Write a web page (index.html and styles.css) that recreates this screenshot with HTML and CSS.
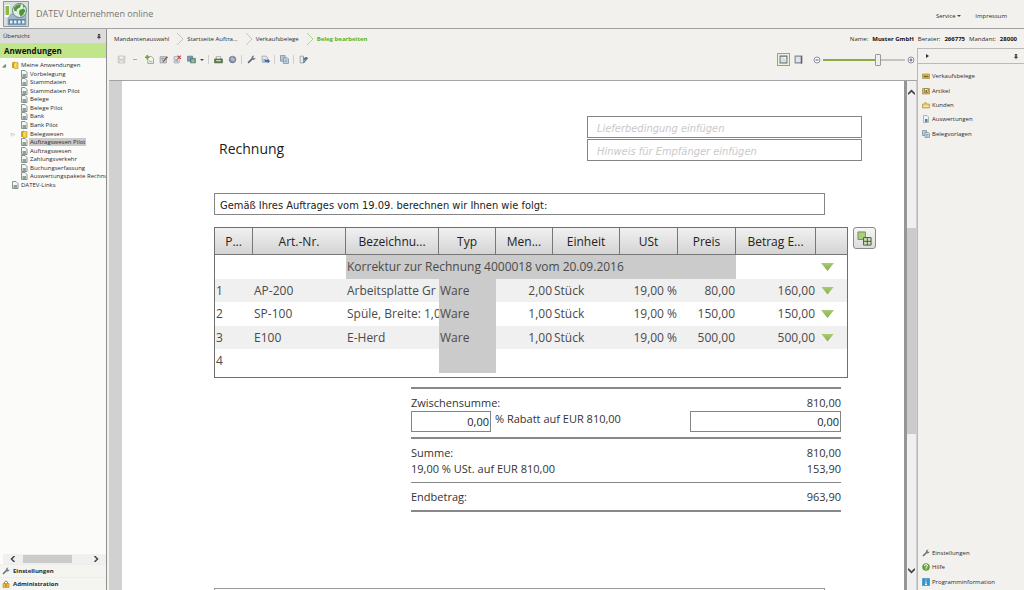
FILE: index.html
```html
<!DOCTYPE html>
<html lang="de">
<head>
<meta charset="utf-8">
<title>DATEV Unternehmen online</title>
<link rel="stylesheet" href="styles.css">
</head>
<body>
<svg class="defs" aria-hidden="true">
  <symbol id="doc" viewBox="0 0 16 16"><path d="M3 1h7l4 4v10H3z" fill="#f4f6f4" stroke="#6f7b76" stroke-width="1.6"/><path d="M5 8h7v6H5z" fill="#8fa39a"/></symbol>
  <symbol id="folder" viewBox="0 0 16 16"><path d="M2 3l6-2v13H2z" fill="#d9a520"/><path d="M6 3h8v12H6z" fill="#f4cf3c" stroke="#b78a17"/><path d="M8 5v8" stroke="#fbeb9a" stroke-width="2"/></symbol>
  <symbol id="wrench" viewBox="0 0 16 16"><path d="M2 14l7-7" stroke="#5d6673" stroke-width="3"/><path d="M8 8c-1-4 1-7 5-7l-2 3 1 2 3-1c0 3-3 5-7 3z" fill="#6d7885"/></symbol>
  <symbol id="lock" viewBox="0 0 16 16"><path d="M5 8V4q3-4 6 0v4" fill="none" stroke="#a08b50" stroke-width="2"/><path d="M2 7h12v8H2z" fill="#e8bd3c" stroke="#a47b18"/><path d="M8 9v4" stroke="#7e5c10" stroke-width="2"/></symbol>
  <symbol id="pin" viewBox="0 0 16 16"><path d="M5 1h6v8H5zM3 9h10v2H3zM7 11h2v4H7z" fill="#333"/><path d="M7 3h2v5H7z" fill="#ddd"/></symbol>
  <symbol id="pages" viewBox="0 0 16 16"><path d="M1 1h8v10H1z" fill="#b9cbd8" stroke="#53697b"/><path d="M6 5h7l2 2v8H6z" fill="#d3e0ea" stroke="#53697b"/><path d="M8 9h5M8 12h5" stroke="#6c90ab" stroke-width="1.5"/></symbol>
  <symbol id="chev" viewBox="0 0 8 12"><path d="M1 0l6 6-6 6" fill="none" stroke="currentColor"/></symbol>
</svg>

<header class="top">
  <svg class="logo" viewBox="0 0 52 52">
    <path d="M1 1h50v50H1z" fill="#d9dfdf" stroke="#8d9a9b" stroke-width="2"/>
    <path d="M4 8h9v24H4z" fill="#fff"/><path d="M5 10h7v18H5z" fill="#8fb93f"/>
    <path d="M16 26h30v22H10V34z" fill="#9db6ca" stroke="#708ba2"/>
    <circle cx="33" cy="19" r="14" fill="#e0eee3" stroke="#62847c" stroke-width="2"/>
    <path d="M22 13q8-9 14-6l-2 6-6 3-1 5-5-2zM33 18l8-3 4 4-5 9-5 3-3-7zM40 7l5 5-5 1z" fill="#4f9636"/>
    <path d="M11 36h34v11H11z" fill="#5d86aa"/>
    <path d="M14 39h5v6h-5zM22 39h5v6h-5zM30 39h5v6h-5zM38 39h5v6h-5z" fill="#e2edf5"/>
  </svg>
  <h1>DATEV Unternehmen online</h1>
  <nav class="meta"><a href="#">Service <span class="tri"></span></a><a href="#">Impressum</a></nav>
</header>

<div class="app">
  <aside class="side">
    <div class="side-head"><span>Übersicht</span><svg class="ic6"><use href="#pin"/></svg></div>
    <h2>Anwendungen</h2>
    <ul class="tree">
      <li class="l1"><span class="tw open">◢</span><svg class="ic"><use href="#folder"/></svg><a href="#">Meine Anwendungen</a></li>
      <li><svg class="ic"><use href="#doc"/></svg><a href="#">Vorbelegung</a></li>
      <li><svg class="ic"><use href="#doc"/></svg><a href="#">Stammdaten</a></li>
      <li><svg class="ic"><use href="#doc"/></svg><a href="#">Stammdaten Pilot</a></li>
      <li><svg class="ic"><use href="#doc"/></svg><a href="#">Belege</a></li>
      <li><svg class="ic"><use href="#doc"/></svg><a href="#">Belege Pilot</a></li>
      <li><svg class="ic"><use href="#doc"/></svg><a href="#">Bank</a></li>
      <li><svg class="ic"><use href="#doc"/></svg><a href="#">Bank Pilot</a></li>
      <li class="exp"><span class="tw">▷</span><svg class="ic"><use href="#folder"/></svg><a href="#">Belegwesen</a></li>
      <li><svg class="ic"><use href="#doc"/></svg><a href="#" class="sel">Auftragswesen Pilot</a></li>
      <li><svg class="ic"><use href="#doc"/></svg><a href="#">Auftragswesen</a></li>
      <li><svg class="ic"><use href="#doc"/></svg><a href="#">Zahlungsverkehr</a></li>
      <li><svg class="ic"><use href="#doc"/></svg><a href="#">Buchungserfassung</a></li>
      <li><svg class="ic"><use href="#doc"/></svg><a href="#">Auswertungspakete Rechnu</a></li>
      <li class="l1 links"><svg class="ic"><use href="#doc"/></svg><a href="#">DATEV-Links</a></li>
    </ul>
    <div class="hscroll">
      <button aria-label="Nach links"><svg viewBox="0 0 8 8"><path d="M6 0L2 4l4 4"/></svg></button>
      <div class="htrack"><div class="hthumb"></div></div>
      <button aria-label="Nach rechts"><svg viewBox="0 0 8 8"><path d="M2 0l4 4-4 4"/></svg></button>
    </div>
    <a class="side-link" href="#"><svg class="ic8"><use href="#wrench"/></svg>Einstellungen</a>
    <a class="side-link" href="#"><svg class="ic8"><use href="#lock"/></svg>Administration</a>
  </aside>

  <main class="main">
    <div class="pathbar">
      <nav class="crumbs">
        <a href="#">Mandantenauswahl</a><svg><use href="#chev"/></svg>
        <a href="#">Startseite Auftra...</a><svg><use href="#chev"/></svg>
        <a href="#">Verkaufsbelege</a><svg class="g"><use href="#chev"/></svg>
        <a href="#" class="cur">Beleg bearbeiten</a>
      </nav>
      <div class="client"><span>Name:</span><b>Muster GmbH</b><span>Berater:</span><b>266775</b><span>Mandant:</span><b>28000</b></div>
    </div>

    <div class="work">
      <section class="editor">
        <div class="toolbar">
          <button aria-label="Speichern" disabled><svg viewBox="0 0 16 16"><path d="M2 2h12v12H2z" fill="#d5d5d5" stroke="#aaa"/><path d="M4 2h8v5H4zM5 10h6v4H5z" fill="#f5f5f5" stroke="#b5b5b5"/></svg></button>
          <button aria-label="Speicheroptionen" disabled><span class="dash"></span></button>
          <button aria-label="Neu"><svg viewBox="0 0 16 16"><path d="M5 3h7l3 3v9H5z" fill="#f5f8f1" stroke="#657060"/><path d="M4 0v8M0 4h8" stroke="#74a630" stroke-width="3"/><path d="M7 10h6v3H7z" fill="#b9c7ab"/></svg></button>
          <button aria-label="Bearbeiten"><svg viewBox="0 0 16 16"><path d="M2 3h11v11H2z" fill="#d8dcdf" stroke="#6a7075"/><path d="M4 6h6M4 9h4" stroke="#59616a"/><path d="M6 12l8-10 2 2-8 9z" fill="#7b5a56"/></svg></button>
          <button aria-label="Löschen"><svg viewBox="0 0 16 16"><path d="M2 3h9v11H2z" fill="#e8eaec" stroke="#7c8289"/><path d="M4 7h5v5H4z" fill="#a7adb4"/><path d="M8 1l6 6M14 1L8 7" stroke="#c2453b" stroke-width="2"/></svg></button>
          <button aria-label="Kopieren"><svg viewBox="0 0 16 16"><path d="M1 2h9v9H1z" fill="#7fa1b8" stroke="#456379"/><path d="M6 6h9v8H6z" fill="#6d9a6b" stroke="#456379"/><path d="M8 9h5M8 12h5" stroke="#e6f0e2"/></svg></button>
          <button class="slim" aria-label="Kopieroptionen"><span class="tri"></span></button>
          <i class="sep"></i>
          <button aria-label="Drucken"><svg viewBox="0 0 16 16"><path d="M4 3h8v5H4z" fill="#fff" stroke="#777"/><path d="M1 7h14v7H1z" fill="#5c8048" stroke="#42543a"/><path d="M4 10h8" stroke="#d8e8c8" stroke-width="2"/></svg></button>
          <button aria-label="Senden"><svg viewBox="0 0 16 16"><circle cx="8" cy="8" r="6" fill="#7f8aa3" stroke="#6a7285"/><path d="M4 6q4-4 7 0t-1 5q-4 1-6-5z" fill="#aeb7ca"/></svg></button>
          <i class="sep"></i>
          <button aria-label="Werkzeug"><svg><use href="#wrench"/></svg></button>
          <button aria-label="Exportieren"><svg viewBox="0 0 16 16"><path d="M2 2h7l2 2v9H2z" fill="#e7edf1" stroke="#71818d"/><path d="M4 7h5v5H4z" fill="#98abb9"/><path d="M7 9h5V6l4 5-4 4v-3H7z" fill="#35679a"/></svg></button>
          <i class="sep"></i>
          <button aria-label="Vorlage"><svg><use href="#pages"/></svg></button>
          <i class="sep"></i>
          <button aria-label="Vorlage anpassen"><svg viewBox="0 0 16 16"><path d="M2 2h6v12H2z" fill="#e8ecef" stroke="#6d7781"/><path d="M8 3l4 4-4 4z" fill="#4f7396"/><path d="M8 14l5-6" stroke="#546a7d" stroke-width="2"/><circle cx="13" cy="6" r="2.500" fill="#546a7d"/></svg></button>
          <span class="grow"></span>
          <button class="view on" aria-label="Einzelseite"><svg viewBox="0 0 16 16"><path d="M2 2h12v12H2z" fill="#fff" stroke="#686d75" stroke-width="2"/><path d="M3 4h6l4 4v5H3z" fill="#d8dde2"/></svg></button>
          <button class="view" aria-label="Seitenbreite"><svg viewBox="0 0 16 16"><path d="M2 2h12v12H2z" fill="#dfe3ea" stroke="#85899a" stroke-width="2"/><path d="M13 2v13" stroke="#555" stroke-width="2"/></svg></button>
          <button class="zoom" aria-label="Verkleinern"><svg viewBox="0 0 16 16"><circle cx="8" cy="8" r="6" fill="#fff" stroke="#8c8f9c" stroke-width="2"/><path d="M5 8h6" stroke="#4b5573" stroke-width="2"/></svg></button>
          <input class="slider" type="range" min="0" max="100" value="68" aria-label="Zoom">
          <button class="zoom" aria-label="Vergrößern"><svg viewBox="0 0 16 16"><circle cx="8" cy="8" r="6" fill="#fff" stroke="#8c8f9c" stroke-width="2"/><path d="M5 8h6M8 5v6" stroke="#4b5573" stroke-width="2"/></svg></button>
        </div>

        <div class="viewport">
          <div class="paper">
            <div class="intro">
              <h3>Rechnung</h3>
              <div class="hints">
                <input class="field" type="text" placeholder="Lieferbedingung einfügen" aria-label="Lieferbedingung">
                <input class="field" type="text" placeholder="Hinweis für Empfänger einfügen" aria-label="Hinweis für Empfänger">
              </div>
            </div>
            <div class="lead"><input class="field" type="text" value="Gemäß Ihres Auftrages vom 19.09. berechnen wir Ihnen wie folgt:" aria-label="Einleitungstext"></div>
            <div class="items">
              <div class="frame">
                <table>
                  <colgroup><col class="c-pos"><col class="c-wide"><col class="c-wide"><col class="c-mid"><col class="c-mid"><col class="c-unit"><col class="c-tax"><col class="c-tax"><col class="c-sum"><col class="c-act"></colgroup>
                  <thead><tr><th>P...</th><th>Art.-Nr.</th><th>Bezeichnu...</th><th>Typ</th><th>Men...</th><th>Einheit</th><th>USt</th><th>Preis</th><th>Betrag E...</th><th></th></tr></thead>
                  <tbody>
                    <tr><td></td><td></td><td class="gray" colspan="6">Korrektur zur Rechnung 4000018 vom 20.09.2016</td><td></td><td class="act"><button class="down" aria-label="Optionen"></button></td></tr>
                    <tr class="odd"><td>1</td><td>AP-200</td><td>Arbeitsplatte Gr</td><td class="gray">Ware</td><td class="r">2,00</td><td>Stück</td><td class="r">19,00 %</td><td class="r">80,00</td><td class="r">160,00</td><td class="act"><button class="down" aria-label="Optionen"></button></td></tr>
                    <tr><td>2</td><td>SP-100</td><td>Spüle, Breite: 1,0</td><td class="gray">Ware</td><td class="r">1,00</td><td>Stück</td><td class="r">19,00 %</td><td class="r">150,00</td><td class="r">150,00</td><td class="act"><button class="down" aria-label="Optionen"></button></td></tr>
                    <tr class="odd"><td>3</td><td>E100</td><td>E-Herd</td><td class="gray">Ware</td><td class="r">1,00</td><td>Stück</td><td class="r">19,00 %</td><td class="r">500,00</td><td class="r">500,00</td><td class="act"><button class="down" aria-label="Optionen"></button></td></tr>
                    <tr><td>4</td><td></td><td></td><td class="gray"></td><td></td><td></td><td></td><td></td><td></td><td></td></tr>
                  </tbody>
                </table>
              </div>
              <button class="cfg" aria-label="Spalten auswählen"><svg viewBox="0 0 16 16"><path d="M1 1h8v8H1z" fill="#a9cf7a" stroke="#6d8f55"/><path d="M7 7h8v8H7z" fill="#cfe0b9" stroke="#435a35"/><path d="M7 11h8M11 7v8" stroke="#435a35"/></svg></button>
            </div>
            <div class="totals">
              <div class="grp">
                <div class="line"><span>Zwischensumme:</span><span>810,00</span></div>
                <div class="line disc"><input class="field pct" id="pct" type="text" value="0,00"><label for="pct">% Rabatt auf EUR 810,00</label><input class="field amt" type="text" value="0,00" aria-label="Rabattbetrag"></div>
              </div>
              <div class="grp">
                <div class="line"><span>Summe:</span><span>810,00</span></div>
                <div class="line"><span>19,00 % USt. auf EUR 810,00</span><span>153,90</span></div>
              </div>
              <div class="grp thin">
                <div class="line"><span>Endbetrag:</span><span>963,90</span></div>
              </div>
            </div>
            <div class="closing"></div>
          </div>
          <div class="vscroll">
            <button aria-label="Nach oben"><svg viewBox="0 0 8 8"><path d="M0 6l4-4 4 4"/></svg></button>
            <div class="vtrack"><div class="vthumb"></div></div>
            <button aria-label="Nach unten"><svg viewBox="0 0 8 8"><path d="M0 2l4 4 4-4"/></svg></button>
          </div>
        </div>
      </section>

      <aside class="panel">
        <div class="panel-head"><span class="rtri"></span><svg class="ic6"><use href="#pin"/></svg></div>
        <nav class="plinks">
          <a href="#"><svg viewBox="0 0 16 16"><path d="M1 4h14v9H1z" fill="#e3c04d" stroke="#8d7326"/><path d="M3 9h10" stroke="#7a6628" stroke-width="3"/></svg>Verkaufsbelege</a>
          <a href="#"><svg viewBox="0 0 16 16"><path d="M1 3h14v11H1z" fill="#dfb743" stroke="#8d7326"/><path d="M5 3h7v8H5z" fill="#f4ebc8" stroke="#5f532c"/><path d="M7 6h3v4H7z" fill="#7a6628"/></svg>Artikel</a>
          <a href="#"><svg viewBox="0 0 16 16"><path d="M1 6h3l3-4 3 4h5v8H1z" fill="#e8ca5c" stroke="#94792a"/><path d="M3 9h10v3H3z" fill="#f6e7a8"/></svg>Kunden</a>
          <a href="#"><svg viewBox="0 0 16 16"><path d="M3 1h7l3 3v11H3z" fill="#eef3f7" stroke="#6b7c8b"/><path d="M6 8h5v6H6z" fill="#4f82ad"/></svg>Auswertungen</a>
          <a href="#"><svg><use href="#pages"/></svg>Belegvorlagen</a>
        </nav>
        <nav class="plinks foot">
          <a href="#"><svg><use href="#wrench"/></svg>Einstellungen</a>
          <a href="#"><svg viewBox="0 0 16 16"><circle cx="8" cy="8" r="7" fill="#68a83a" stroke="#4b7d27"/><path d="M5 6q0-3 3-3t3 3q0 1-3 3v1M8 11v2" fill="none" stroke="#fff" stroke-width="2"/></svg>Hilfe</a>
          <a href="#"><svg viewBox="0 0 16 16"><path d="M1 1h14v14H1z" fill="#2f93cf" stroke="#2378ad"/><path d="M8 3v2M8 7v6M6 13h4" stroke="#fff" stroke-width="2"/></svg>Programminformation</a>
        </nav>
      </aside>
    </div>
  </main>
</div>
</body>
</html>
```
FILE: styles.css
```css
* { box-sizing: border-box; }
body {
  margin: 0;
  height: 100vh;
  display: flex;
  flex-direction: column;
  overflow: hidden;
  background: #f2f1ee;
  color: #2b2b2b;
  font: 6px/8px "Open Sans", "Noto Sans", sans-serif;
}
a { color: inherit; text-decoration: none; }
button { padding: 0; border: 0; background: none; display: flex; align-items: center; justify-content: center; }
h1, h2, h3, ul { margin: 0; padding: 0; font-weight: 400; }
.defs { display: none; }
.grow { flex: 1; }
.ic { width: 8px; height: 8px; flex: none; }
.ic6 { width: 6px; height: 7px; }
.ic8 { width: 8px; height: 8px; }
.tri { display: inline-block; border: 2px solid transparent; border-top-color: #444; border-bottom: 0; vertical-align: middle; }

.top { height: 29px; flex: none; display: flex; align-items: center; padding: 0 17px 0 3px; border-bottom: 1px solid #a3a3a3; }
.logo { width: 26px; height: 26px; }
.top h1 { margin-left: 7px; font-size: 9px; line-height: 12px; color: #777; }
.meta { margin-left: auto; display: flex; gap: 14px; padding-top: 3px; }

.app { flex: 1; min-height: 0; display: flex; }
.side { width: 107px; flex: none; display: flex; flex-direction: column; background: #fbfbf9; border-right: 1px solid #8f8f8f; overflow: hidden; }
.side-head { height: 14px; display: flex; align-items: center; justify-content: space-between; padding: 0 4px 0 3px; background: #dcdcdc; }
.side h2 { height: 15px; padding-left: 4px; background: #c1e589; color: #111; font-size: 8px; line-height: 15px; font-weight: 700; }
.tree { list-style: none; height: 128px; margin-top: 3px; display: grid; grid-auto-rows: 1fr; }
.tree li { display: flex; align-items: center; gap: 1px; padding-left: 20px; white-space: nowrap; }
.tree .l1 { padding-left: 2px; }
.tree .links { padding-left: 11px; }
.tree .exp { padding-left: 11px; }
.tw { width: 8px; font: 5px/8px "DejaVu Sans", sans-serif; color: #777; }
.tree a { padding: 0 1px; }
.tree .sel { background: #cacaca; }
.hscroll { margin: auto 0 0 3px; height: 10px; display: flex; background: #f0f0f0; }
.hscroll button { width: 20px; }
.hscroll svg, .vscroll svg { width: 6px; height: 6px; fill: none; stroke: #444; stroke-width: 2; }
.htrack { flex: 1; padding: 1px 0; }
.hthumb { width: 78%; height: 8px; background: #cbcbcb; }
.side-link { height: 13px; display: flex; align-items: center; gap: 3px; padding-left: 2px; font-weight: 700; background: #f4f4f1; border-top: 1px solid #ededea; }

.main { flex: 1; min-width: 0; display: flex; flex-direction: column; }
.pathbar { height: 19px; display: flex; align-items: center; justify-content: space-between; padding: 1px 7px 0; }
.crumbs, .client { display: flex; align-items: center; white-space: nowrap; }
.crumbs svg { width: 8px; height: 12px; margin: 0 3px 0 7px; color: #c4c4c4; }
.crumbs .g { color: #a8d88a; }
.crumbs .cur { color: #52b52b; font-weight: 700; }
.client { gap: 4px; }
.client b { color: #111; }
.work { flex: 1; min-height: 0; display: flex; }
.editor { flex: 1; min-width: 0; display: flex; flex-direction: column; padding-left: 2px; }
.toolbar { height: 33px; display: flex; align-items: center; gap: 2px; padding: 0 2px 9px 6px; border-bottom: 1px solid #a3a3a3; }
.toolbar button { width: 12px; height: 12px; }
.toolbar .slim { width: 6px; }
.toolbar svg { width: 9px; height: 9px; }
.toolbar button:disabled svg { opacity: .8; }
.dash { width: 4px; height: 1px; background: #aaa; }
.sep { width: 1px; height: 9px; margin: 0 1px; background: #cfcfcf; }
.toolbar .view { width: 13px; height: 13px; }
.toolbar .on { border: 1px solid #7fbf35; background: #e8f3d8; }
.toolbar .zoom { width: 8px; }
.toolbar .zoom svg { width: 8px; height: 8px; }
.view + .zoom { margin-left: 6px; }
.slider { width: 82px; height: 12px; margin: 0; appearance: none; background: linear-gradient(to right, #8aab45 66%, #c4c4c4 66%) center / 100% 2px no-repeat; }
.slider::-webkit-slider-thumb { appearance: none; width: 6px; height: 12px; border: 1px solid #999; border-radius: 1px; background: #eee; }

.viewport { flex: 1; min-height: 0; display: flex; }
.paper { flex: 1; min-width: 0; overflow: hidden; background: #fff; border-left: 13px solid #d1d1d1; border-right: 3px solid #969696; padding: 35px 0 0 92px; }
.field { height: 22px; padding: 0 5px; border: 1px solid #858585; background: #fff; color: #222; font: inherit; border-radius: 0; min-width: 0; }
.intro { display: flex; justify-content: space-between; align-items: center; padding-right: 42px; }
.intro h3 { padding: 20px 0 0 5px; font-size: 14px; line-height: 20px; color: #1c1c1c; }
.hints { width: 275px; display: flex; flex-direction: column; gap: 1px; font: 11px/14px "DejaVu Sans Condensed", "DejaVu Sans", sans-serif; }
.hints .field { padding: 3px 9px 0; }
.hints .field::placeholder { color: #c9c9c9; font-style: italic; opacity: 1; }
.lead { margin: 32px 79px 0 0; display: flex; font: 11px/14px "DejaVu Sans Condensed", "DejaVu Sans", sans-serif; }
.lead .field { flex: 1; padding-top: 2px; }
.items { margin-top: 12px; padding-right: 28px; display: flex; align-items: flex-start; gap: 5px; }
.frame { flex: 1; min-width: 0; padding-bottom: 4px; border: 1px solid #6f6f6f; }
table { width: 100%; table-layout: fixed; border-collapse: separate; border-spacing: 0; font-size: 12px; line-height: 16px; color: #4a4a4a; }
.c-pos { width: 38px; }
.c-wide { width: 93px; }
.c-mid { width: 57px; }
.c-tax { width: 58px; }
.c-unit { width: 67px; }
.c-sum { width: 80px; }
.c-act { width: 31px; }
th { height: 27px; padding: 2px 0 0; font-weight: 400; color: #222; background: linear-gradient(#f1f1f1, #d4d4d4); border-right: 1px solid #777; border-bottom: 1px solid #777; }
th:last-child { border-right: 0; }
td { height: 24px; padding: 0 1px; overflow: hidden; white-space: nowrap; }
.odd td { height: 23px; }
.odd { background: #f0f0f0; }
.gray { background: #cbcbcb; }
.r { text-align: right; }
.act { padding-left: 5px; }
.down { width: 13px; height: 8px; background: linear-gradient(#a9cb72, #86ad4c); clip-path: polygon(0 0, 100% 0, 50% 100%); }
.cfg { width: 23px; height: 22px; border: 1px solid #8a8a8a; border-radius: 3px; background: linear-gradient(#f6f6f6, #dcdcdc); }
.cfg svg { width: 15px; height: 15px; }
.totals { width: 430px; margin: 9px 63px 0 auto; border-bottom: 2px solid #888; font-size: 11px; line-height: 16px; color: #333; }
.grp { padding: 6px 0 5px; border-top: 2px solid #888; }
.thin { border-top: 1px solid #888; }
.line { display: flex; justify-content: space-between; }
.disc label { flex: 1; padding-left: 4px; }
.disc .field { padding: 0 1px; text-align: right; height: 21px; }
.disc .pct { width: 80px; }
.disc .amt { width: 151px; }
.closing { height: 40px; margin: 76px 79px 0 0; border: 1px solid #999; }

.vscroll { width: 10px; display: flex; flex-direction: column; background: #f0f0f0; border-right: 1px solid #d0d0d0; }
.vscroll button { height: 22px; width: 9px; }
.vscroll button:last-child { height: 40px; }
.vscroll svg { width: 7px; height: 7px; }
.vtrack { flex: 1; padding-top: 125px; }
.vthumb { height: 64%; max-height: 207px; background: #cbcbcb; }

.panel { width: 107px; flex: none; display: flex; flex-direction: column; border: 1px solid #b9b9b9; border-width: 1px 0 0 1px; }
.panel-head { height: 15px; display: flex; align-items: center; justify-content: space-between; padding: 0 5px 0 8px; border-bottom: 1px solid #b9b9b9; }
.rtri { border: 2px solid transparent; border-left: 3px solid #333; border-right: 0; }
.plinks { display: grid; grid-auto-rows: 1fr; height: 77px; padding: 5px 0 0 4px; }
.plinks a { display: flex; align-items: center; gap: 2px; }
.plinks svg { width: 8px; height: 8px; }
.plinks.foot { height: 44px; margin-top: auto; padding: 0 0 1px 4px; }
```
